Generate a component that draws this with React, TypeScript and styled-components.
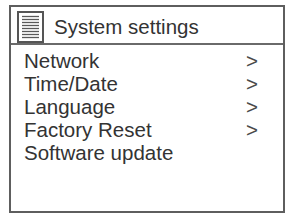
import React from "react";
import styled, { createGlobalStyle } from "styled-components";

const Global = createGlobalStyle`
  html, body { margin: 0; padding: 0; background: #ffffff; }
  body { font-family: "Liberation Sans", Arial, sans-serif; }
`;

const Page = styled.div`
  padding: 5px 4px 2px 9px;
`;

const Screen = styled.div`
  width: 276px;
  height: 208px;
  box-sizing: border-box;
  border: 2px solid #5e5e5e;
  display: flex;
  flex-direction: column;
`;

const Header = styled.div`
  height: 38px;
  box-sizing: border-box;
  border-bottom: 2px solid #6a6a6a;
  display: flex;
  align-items: flex-start;
  padding: 4px 0 0 6px;
  gap: 10px;
`;

const Title = styled.div`
  font-size: 20.5px;
  line-height: 23px;
  color: #333333;
  margin-top: 4px;
`;

const List = styled.div`
  padding: 4px 0 0 13px;
  display: flex;
  flex-direction: column;
`;

const Row = styled.div`
  display: grid;
  grid-template-columns: 1fr 37px;
  font-size: 20.5px;
  line-height: 23px;
  color: #333333;
`;

const Arrow = styled.span`
  color: #4a4a4a;
`;

const MenuIcon = () => (
  <svg width="27" height="32" viewBox="0 0 27 32" style={{ flex: "none" }}>
    <rect x="1" y="1" width="25" height="30" fill="none" stroke="#555" strokeWidth="2" />
    {[6, 9, 12, 15, 18, 21, 24, 27].map((y) => (
      <line key={y} x1="5" x2="22" y1={y - 0.5} y2={y - 0.5} stroke="#5a5a5a" strokeWidth="1.3" />
    ))}
  </svg>
);

const items: { label: string; arrow: boolean }[] = [
  { label: "Network", arrow: true },
  { label: "Time/Date", arrow: true },
  { label: "Language", arrow: true },
  { label: "Factory Reset", arrow: true },
  { label: "Software update", arrow: false },
];

export default function App() {
  return (
    <>
      <Global />
      <Page>
        <Screen>
          <Header>
            <MenuIcon />
            <Title>System settings</Title>
          </Header>
          <List>
            {items.map((it) => (
              <Row key={it.label}>
                <span>{it.label}</span>
                <Arrow>{it.arrow ? ">" : ""}</Arrow>
              </Row>
            ))}
          </List>
        </Screen>
      </Page>
    </>
  );
}
